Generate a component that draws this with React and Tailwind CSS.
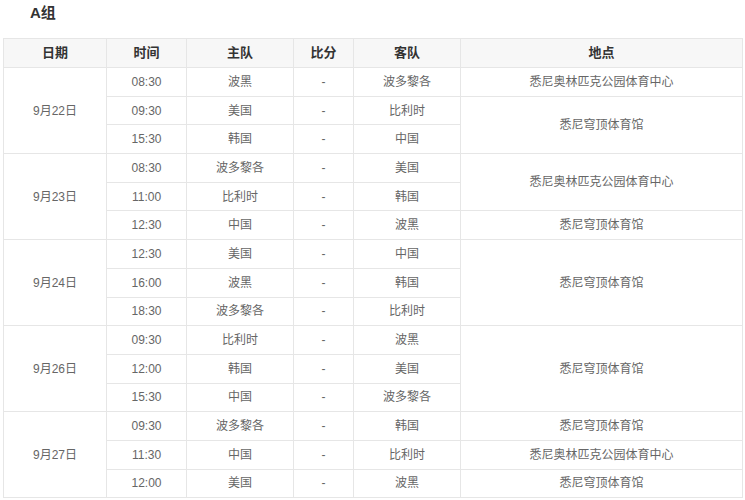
import React from "react";

const rows = [
  { date: "9月22日", span: 3, time: "08:30", home: "波黑", away: "波多黎各", venue: "悉尼奥林匹克公园体育中心", vspan: 1 },
  { time: "09:30", home: "美国", away: "比利时", venue: "悉尼穹顶体育馆", vspan: 2 },
  { time: "15:30", home: "韩国", away: "中国" },
  { date: "9月23日", span: 3, time: "08:30", home: "波多黎各", away: "美国", venue: "悉尼奥林匹克公园体育中心", vspan: 2 },
  { time: "11:00", home: "比利时", away: "韩国" },
  { time: "12:30", home: "中国", away: "波黑", venue: "悉尼穹顶体育馆", vspan: 1 },
  { date: "9月24日", span: 3, time: "12:30", home: "美国", away: "中国", venue: "悉尼穹顶体育馆", vspan: 3 },
  { time: "16:00", home: "波黑", away: "韩国" },
  { time: "18:30", home: "波多黎各", away: "比利时" },
  { date: "9月26日", span: 3, time: "09:30", home: "比利时", away: "波黑", venue: "悉尼穹顶体育馆", vspan: 3 },
  { time: "12:00", home: "韩国", away: "美国" },
  { time: "15:30", home: "中国", away: "波多黎各" },
  { date: "9月27日", span: 3, time: "09:30", home: "波多黎各", away: "韩国", venue: "悉尼穹顶体育馆", vspan: 1 },
  { time: "11:30", home: "中国", away: "比利时", venue: "悉尼奥林匹克公园体育中心", vspan: 1 },
  { time: "12:00", home: "美国", away: "波黑", venue: "悉尼穹顶体育馆", vspan: 1 },
];

const cell = "border border-[#e6e6e6] text-center align-middle p-0";

export default function App() {
  return (
    <div
      className="bg-white w-[745px] h-[500px] overflow-hidden"
      style={{ fontFamily: '"Liberation Sans", "Noto Sans CJK SC", sans-serif' }}
    >
      <div className="pl-[30px] pt-[3px] h-[38px] text-[15px] font-bold text-[#333] leading-[20px]">A组</div>
      <table className="ml-[3px] w-[739px] border-collapse table-fixed text-[12px] text-[#666]">
        <colgroup>
          <col className="w-[103px]" />
          <col className="w-[80px]" />
          <col className="w-[107px]" />
          <col className="w-[60px]" />
          <col className="w-[107px]" />
          <col className="w-[282px]" />
        </colgroup>
        <thead>
          <tr className="h-[29px] bg-[#f7f7f7] text-[13px] font-bold text-[#333]">
            <th className={cell}>日期</th>
            <th className={cell}>时间</th>
            <th className={cell}>主队</th>
            <th className={cell}>比分</th>
            <th className={cell}>客队</th>
            <th className={cell}>地点</th>
          </tr>
        </thead>
        <tbody>
          {rows.map((r, i) => (
            <tr key={i} className="h-[28.7px]">
              {r.date && (
                <td rowSpan={r.span} className={cell}>
                  {r.date}
                </td>
              )}
              <td className={cell}>{r.time}</td>
              <td className={cell}>{r.home}</td>
              <td className={cell}>-</td>
              <td className={cell}>{r.away}</td>
              {r.venue && (
                <td rowSpan={r.vspan} className={cell}>
                  {r.venue}
                </td>
              )}
            </tr>
          ))}
        </tbody>
      </table>
    </div>
  );
}
